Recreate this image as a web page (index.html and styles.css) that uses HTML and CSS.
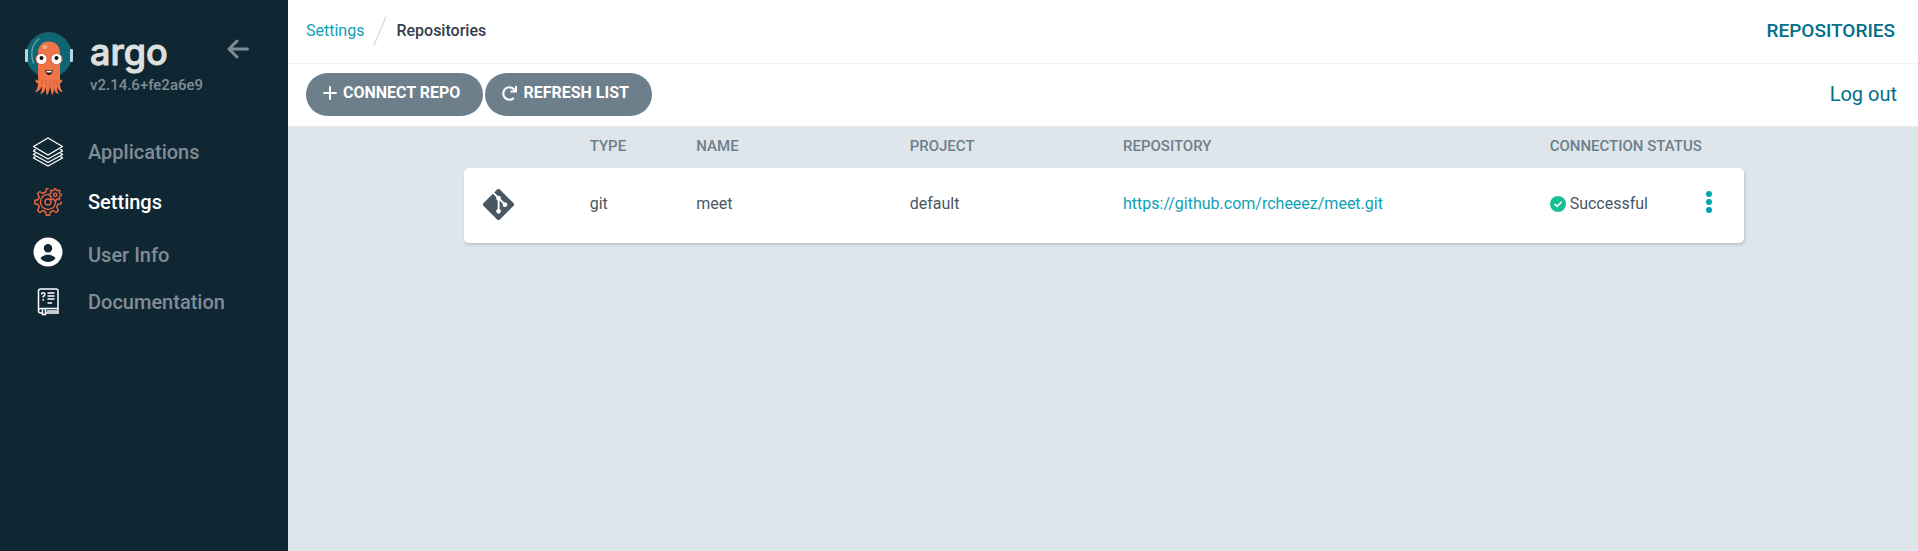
FILE: index.html
```html
<!DOCTYPE html>
<html lang="en">
<head>
<meta charset="utf-8">
<title>Repositories</title>
<link rel="stylesheet" href="styles.css">
</head>
<body>
<div class="layout">
  <aside class="sidebar">
    <div class="brand">
      <svg class="brand-mascot" viewBox="0 0 48 64" width="48" height="64" aria-hidden="true">
        <circle cx="24" cy="23" r="22.5" fill="#0f6673" stroke="#28566a" stroke-width="1"/>
        <path d="M14 7C7 12 5 21 8.500 31" fill="none" stroke="#5b9fa8" stroke-width="1.500" stroke-linecap="round"/>
        <rect x="0" y="17" width="3" height="13" rx="1" fill="#b9d4e6"/>
        <rect x="45" y="17" width="3" height="13" rx="1" fill="#b9d4e6"/>
        <path d="M13 21C13 14 17.500 9.500 24 9.500S35 14 35 21V46C35 49 37 49 37 47C38 50 36 51 35 51C35 56 37 59 38 60C35 60 33 58 32 54C32 59 33 61 34 62C31 62 29 59 29 55C29 60 28 62 28 63C26 62 26 58 25 55C24 58 24 62 22 63C21 61 21 59 21 55C20 59 18 62 15 62C17 59 17 57 17 54C15 58 13 60 10 60C12 58 13 55 13 51C11 51 10 50 11 47C12 49 14 49 13 46Z" fill="#ef7548"/>
        <path d="M17 48V53M21 48V54M25 49V55M29 48V54M32 48V53" stroke="#d95f38" stroke-width="1"/>
        <ellipse cx="20" cy="15" rx="2.500" ry="2" fill="#f9a987"/>
        <circle cx="16.500" cy="27" r="5.600" fill="#fff" stroke="#dc5b38" stroke-width="1"/>
        <circle cx="31.500" cy="27" r="5.600" fill="#fff" stroke="#dc5b38" stroke-width="1"/>
        <circle cx="16.500" cy="26" r="2" fill="#111"/>
        <circle cx="31.500" cy="26" r="2" fill="#111"/>
        <path d="M20 37.500Q24 39.500 28 37.500Q27 43 24 43T20 37.500Z" fill="#201a18"/>
        <path d="M21 38.500Q24 39.500 27 38.500L26 40.500H22Z" fill="#fff"/>
      </svg>
      <div class="brand-words">
        <span class="brand-name">argo</span>
        <span class="version">v2.14.6+fe2a6e9</span>
      </div>
      <button class="collapse" type="button" aria-label="Collapse sidebar">
        <svg viewBox="0 0 22 20" width="22" height="20"><path d="M10 2L2 10L10 18M2 10H20.500" fill="none" stroke="currentColor" stroke-width="3" stroke-linecap="round" stroke-linejoin="round"/></svg>
      </button>
    </div>
    <nav class="nav">
      <a class="nav-item" href="#applications">
        <svg class="nav-icon" viewBox="0 0 32 30" fill="none" stroke="#fff" stroke-width="1.400" stroke-linejoin="round"><path d="M16 1L30.500 9.500L16 18L1.500 9.500Z"/><path d="M3.500 12L1.500 14L16 22L30.500 14L28.500 12"/><path d="M3.500 16L1.500 17.500L16 25.500L30.500 17.500L28.500 16"/><path d="M3.500 19.500L1.500 21L16 29L30.500 21L28.500 19.500"/></svg>
        <span>Applications</span>
      </a>
      <a class="nav-item active" href="#settings">
        <svg class="nav-icon" viewBox="-16 -15 32 30" fill="none" stroke="#ef6240" stroke-width="1.400" stroke-linejoin="round" stroke-linecap="round">
          <defs><path id="tooth" d="M-3.900 -9.300L-2.300 -10L-1.700 -13.200H1.700L2.300 -10L3.900 -9.300"/></defs>
          <circle r="3"/>
          <path d="M1 -7.600A7.600 7.600 0 1 0 7.600 -1"/>
          <path d="M-3.900 -9.300L-2.300 -10L-1.700 -13.200H0"/>
          <path d="M13.200 0V1.700L10 2.300L9.300 3.900"/>
          <use href="#tooth" transform="rotate(135)"/><use href="#tooth" transform="rotate(180)"/><use href="#tooth" transform="rotate(225)"/><use href="#tooth" transform="rotate(270)"/><use href="#tooth" transform="rotate(315)"/>
          <circle cx="7.200" cy="-7.200" r="1.700"/>
          <g transform="translate(7.200 -7.200) scale(.46)" stroke-width="2.700"><use href="#tooth"/><use href="#tooth" transform="rotate(45)"/><use href="#tooth" transform="rotate(90)"/><use href="#tooth" transform="rotate(135)"/><use href="#tooth" transform="rotate(180)"/><use href="#tooth" transform="rotate(225)"/><use href="#tooth" transform="rotate(270)"/><use href="#tooth" transform="rotate(315)"/></g>
        </svg>
        <span>Settings</span>
      </a>
      <a class="nav-item nav-item-low" href="#user-info">
        <svg class="nav-icon" viewBox="-16 -15 32 30"><circle r="14.500" fill="#fff"/><circle cy="-3.800" r="4.200" fill="#0f2733"/><path d="M-7.500 6.300C-5 1.600 5 1.600 7.500 6.300C4 11.300 -4 11.300 -7.500 6.300Z" fill="#0f2733"/></svg>
        <span>User Info</span>
      </a>
      <a class="nav-item" href="#documentation">
        <svg class="nav-icon" viewBox="0 0 32 30" fill="none" stroke="#fff" stroke-width="1.500"><path d="M10 26H8.500Q6.500 26 6.500 24V4Q6.500 2 8.500 2H24Q26 2 26 4V26H14"/><path d="M6.500 23Q7 21.500 9 21.500H26M15 24H25"/><path d="M10.500 22V27.500H13.500V22"/><path d="M15.500 6H22.500M15.500 9H22.500M15.500 12H22.500M15.500 16H20"/><path d="M9.500 7.500Q9.500 5.700 11.200 5.700T12.800 7.500Q12.800 8.800 11.200 9.500V10.500M11.200 12V13.800"/></svg>
        <span>Documentation</span>
      </a>
    </nav>
  </aside>

  <div class="page">
    <header class="topbar">
      <nav class="crumbs" aria-label="Breadcrumb">
        <a class="link" href="#settings">Settings</a>
        <svg viewBox="0 0 14 30" width="14" height="30" aria-hidden="true"><path d="M1 29L13 1" stroke="#d3dbe1" stroke-width="1.300"/></svg>
        <span class="crumb-current">Repositories</span>
      </nav>
      <h1 class="page-title">REPOSITORIES</h1>
    </header>
    <div class="toolbar">
      <div class="actions">
        <button class="button" type="button">
          <svg viewBox="0 0 14 14" width="14" height="14" aria-hidden="true"><path d="M7 1V13M1 7H13" stroke="currentColor" stroke-width="2" stroke-linecap="round"/></svg>
          CONNECT REPO
        </button>
        <button class="button" type="button">
          <svg viewBox="0 0 512 512" width="15" height="15" aria-hidden="true"><path fill="currentColor" d="M500.330 0h-47.410a12 12 0 0 0-12 12.570l4 82.760A247.420 247.420 0 0 0 256 8C119.340 8 7.900 119.530 8 256.190 8.100 393.070 119.100 504 256 504a247.100 247.100 0 0 0 166.180-63.910 12 12 0 0 0 .48-17.430l-34-34a12 12 0 0 0-16.380-.55A176 176 0 1 1 402.100 157.800l-101.530-4.870a12 12 0 0 0-12.570 12v47.410a12 12 0 0 0 12 12h200.330a12 12 0 0 0 12-12V12a12 12 0 0 0-12-12z"/></svg>
          REFRESH LIST
        </button>
      </div>
      <a class="logout" href="#logout">Log out</a>
    </div>
    <main class="content">
      <table class="repos">
        <thead>
          <tr><td></td><th scope="col">TYPE</th><th scope="col">NAME</th><th scope="col">PROJECT</th><th scope="col">REPOSITORY</th><th scope="col">CONNECTION STATUS</th></tr>
        </thead>
        <tbody>
          <tr>
            <td><svg class="git" viewBox="0 32 448 448" width="31" height="31" aria-hidden="true"><path fill="#495763" d="M439.550 236.050L244 40.450a28.870 28.870 0 0 0-40.810 0l-40.660 40.630 51.520 51.520c27.060-9.140 52.680 16.770 43.390 43.680l49.660 49.660c34.230-11.800 61.180 31 35.470 56.690-26.490 26.490-70.210-2.870-56-37.340L240.220 199v121.850c25.300 12.540 22.260 41.850 9.080 55a34.340 34.340 0 0 1-48.550 0c-17.570-17.600-11.070-46.910 11.250-56v-123c-20.800-8.510-24.600-30.740-18.640-45L142.570 101 8.450 235.140a28.860 28.860 0 0 0 0 40.810l195.610 195.600a28.860 28.860 0 0 0 40.800 0l194.690-194.690a28.860 28.860 0 0 0 0-40.810z"/></svg></td>
            <td>git</td>
            <td>meet</td>
            <td>default</td>
            <td><a class="link" href="https://github.com/rcheeez/meet.git">https://github.com/rcheeez/meet.git</a></td>
            <td class="status">
              <svg viewBox="0 0 16 16" width="16" height="16" aria-hidden="true"><circle cx="8" cy="8" r="8" fill="#18be94"/><path d="M5 8.300L7.200 10.400L11.200 6.200" fill="none" stroke="#fff" stroke-width="1.600" stroke-linecap="round" stroke-linejoin="round"/></svg>
              <span>Successful</span>
              <button class="menu" type="button" aria-label="Actions"><svg viewBox="0 0 6 22" width="6" height="22"><g fill="#00a2b3"><circle cx="3" cy="3" r="3"/><circle cx="3" cy="11" r="3"/><circle cx="3" cy="19" r="3"/></g></svg></button>
            </td>
          </tr>
        </tbody>
      </table>
    </main>
  </div>
</div>
</body>
</html>
```
FILE: styles.css
```css
* {
  box-sizing: border-box;
}

body {
  margin: 0;
  background: #dee6ec;
  color: #495763;
  font: 16px/24px Roboto, sans-serif;
}

a {
  text-decoration: none;
}

button {
  border: 0;
  padding: 0;
  background: none;
  font: inherit;
  cursor: pointer;
}

svg {
  display: block;
  flex: none;
}

.layout {
  display: flex;
  min-height: 100vh;
}

/* Sidebar */
.sidebar {
  flex: 0 0 288px;
  background: #0f2733;
}

.brand {
  display: flex;
  align-items: flex-start;
  padding: 32px 39px 0 25px;
  height: 127px;
}

.brand-words {
  display: flex;
  flex-direction: column;
  gap: 8px;
  margin: 4px 0 0 17px;
}

.brand-name {
  color: #dee0df;
  font: 500 36px/32px Inter, sans-serif;
  -webkit-text-stroke: 1px #dee0df;
}

.version {
  color: #818d94;
  font-size: 15px;
  font-weight: 500;
  line-height: 18px;
}

.collapse {
  margin: 7px 0 0 auto;
  color: #818d94;
}

.nav-item {
  display: flex;
  align-items: center;
  gap: 24px;
  height: 50px;
  padding: 10px 32px;
  color: #818d94;
  font-size: 20px;
  font-weight: 500;
}

.nav-item-low {
  align-items: flex-end;
}

.nav-item.active {
  color: #fff;
}

.nav-icon {
  width: 32px;
  height: 30px;
}

/* Top bars */
.page {
  flex: 1;
  min-width: 0;
}

.topbar,
.toolbar {
  display: flex;
  align-items: center;
  justify-content: space-between;
  background: #fff;
}

.topbar {
  height: 64px;
  padding: 0 23px 2px 18px;
  border-bottom: 1px solid #eff2f4;
}

.toolbar {
  height: 63px;
  padding: 0 21px 2px 18px;
  border-bottom: 1px solid #e6ecf0;
}

.crumbs {
  display: flex;
  align-items: center;
  gap: 9px;
}

.link {
  color: #0f9fb4;
}

.crumb-current {
  color: #363c4a;
  font-weight: 500;
}

.page-title {
  margin: 0;
  color: #006f8a;
  font-size: 19px;
  font-weight: 500;
}

.actions {
  display: flex;
  gap: 2px;
}

.button {
  display: flex;
  align-items: center;
  gap: 6px;
  height: 43px;
  padding: 0 23px 2px 17px;
  border-radius: 22px;
  background: #6d7f8b;
  color: #fff;
  font-weight: 700;
}

.logout {
  color: #006f8a;
  font-size: 20px;
}

/* Repository table */
.content {
  padding: 5px 18px 18px 20px;
}

.repos {
  display: block;
  max-width: 1280px;
  margin: 0 auto;
}

.repos thead,
.repos tbody {
  display: block;
}

.repos tr {
  display: grid;
  grid-template-columns: 1fr 1fr 2fr 2fr 4fr 2fr;
  align-items: center;
}

.repos th,
.repos td {
  padding: 0 0 0 19px;
  text-align: left;
  white-space: nowrap;
}

.repos th {
  color: #6d7f8b;
  font-size: 15px;
  font-weight: 500;
  line-height: 28px;
}

.repos thead {
  padding-bottom: 8px;
}

.repos tbody tr {
  height: 75px;
  padding-bottom: 3px;
  border-radius: 5px;
  background: #fff;
  box-shadow: 1px 2px 3px rgba(80, 105, 100, 0.25);
}

.repos .status {
  display: flex;
  align-items: center;
  gap: 4px;
}

.menu {
  margin: 0 32px 4px auto;
}
```
